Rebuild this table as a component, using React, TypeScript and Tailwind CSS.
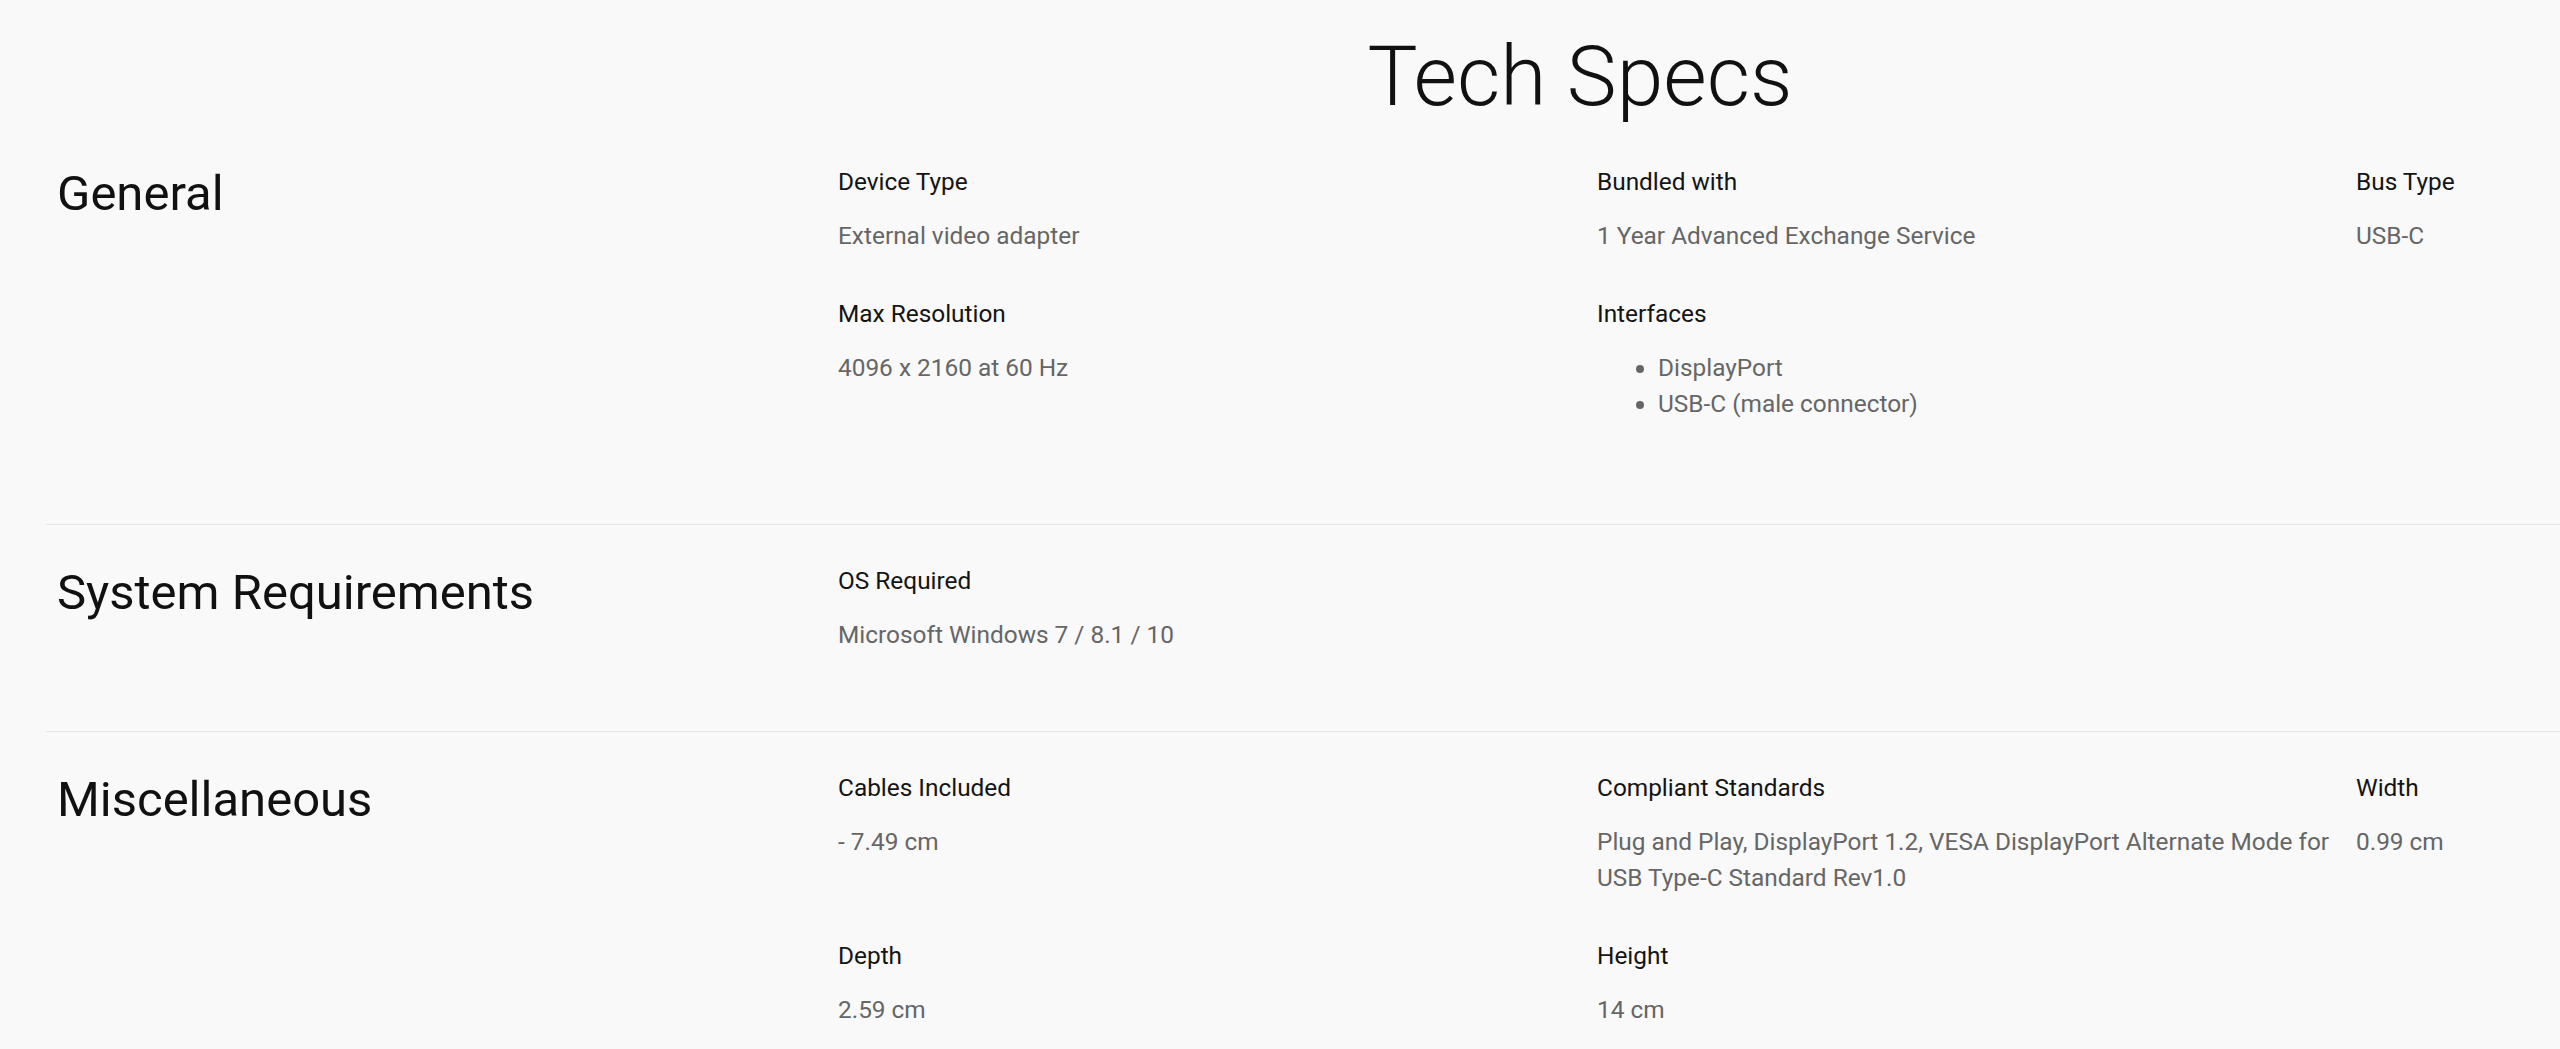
import React from "react";

type Spec = { label: string; value?: string; list?: string[] };
type Section = { title: string; items: Spec[] };

const sections: Section[] = [
  {
    title: "General",
    items: [
      { label: "Device Type", value: "External video adapter" },
      { label: "Bundled with", value: "1 Year Advanced Exchange Service" },
      { label: "Bus Type", value: "USB-C" },
      { label: "Max Resolution", value: "4096 x 2160 at 60 Hz" },
      { label: "Interfaces", list: ["DisplayPort", "USB-C (male connector)"] },
    ],
  },
  {
    title: "System Requirements",
    items: [{ label: "OS Required", value: "Microsoft Windows 7 / 8.1 / 10" }],
  },
  {
    title: "Miscellaneous",
    items: [
      { label: "Cables Included", value: "- 7.49 cm" },
      {
        label: "Compliant Standards",
        value:
          "Plug and Play, DisplayPort 1.2, VESA DisplayPort Alternate Mode for USB Type-C Standard Rev1.0",
      },
      { label: "Width", value: "0.99 cm" },
      { label: "Depth", value: "2.59 cm" },
      { label: "Height", value: "14 cm" },
    ],
  },
];

function Item({ spec }: { spec: Spec }) {
  return (
    <div className="mb-[44px] pr-[20px]">
      <div className="text-[24.4px] leading-[32px] text-[#141414]">{spec.label}</div>
      {spec.value && (
        <div className="mt-[20px] text-[24.4px] leading-[36px] text-[#666666]">{spec.value}</div>
      )}
      {spec.list && (
        <ul className="mt-[20px] mb-[24px] list-disc pl-[61px] text-[24.4px] leading-[36px] text-[#666666]">
          {spec.list.map((l) => (
            <li key={l}>{l}</li>
          ))}
        </ul>
      )}
    </div>
  );
}

export default function App() {
  return (
    <div
      className="w-[2560px] h-[1049px] overflow-hidden bg-[#f9f9f9]"
      style={{ fontFamily: "Roboto, 'Noto Sans', sans-serif" }}
    >
      <div className="w-[3160px] px-[46px]">
        <h1 className="pt-[35px] mb-[7px] text-center text-[84px] leading-none font-light text-[#111111]">
          Tech Specs
        </h1>
        {sections.map((s, i) => (
          <div
            key={s.title}
            className={`flex pt-[40px] pb-[34px] ${i > 0 ? "border-t border-[#e6e6e6]" : ""}`}
          >
            <div className="w-[792px] shrink-0 pl-[11px]">
              <h2 className="text-[49px] leading-none text-[#111111] mt-[3px]">{s.title}</h2>
            </div>
            <div className="grid grid-cols-[759px_759px_759px]">
              {s.items.map((it) => (
                <Item key={it.label} spec={it} />
              ))}
            </div>
          </div>
        ))}
      </div>
    </div>
  );
}
